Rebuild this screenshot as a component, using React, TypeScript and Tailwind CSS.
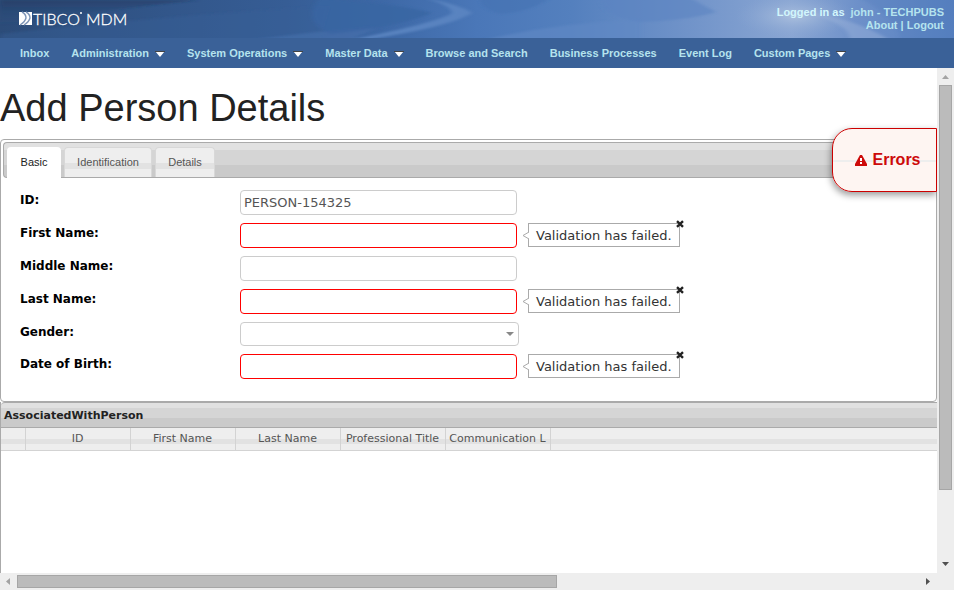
import { ReactNode } from "react";

const NAV_ITEMS = [
  { label: "Inbox" },
  { label: "Administration", menu: true },
  { label: "System Operations", menu: true },
  { label: "Master Data", menu: true },
  { label: "Browse and Search" },
  { label: "Business Processes" },
  { label: "Event Log" },
  { label: "Custom Pages", menu: true },
];

const COLUMNS = ["ID", "First Name", "Last Name", "Professional Title", "Communication L"];

function BannerArt() {
  return (
    <svg className="absolute inset-0 h-full w-full" viewBox="0 0 954 38" preserveAspectRatio="none" aria-hidden="true">
      <defs>
        <linearGradient id="sky" x1="0" x2="1" y1="0" y2="0">
          <stop offset="0" stopColor="#2c4c79" />
          <stop offset="0.12" stopColor="#305385" />
          <stop offset="0.3" stopColor="#365d95" />
          <stop offset="0.4" stopColor="#3d68a6" />
          <stop offset="0.5" stopColor="#4a77b8" />
          <stop offset="0.6" stopColor="#5480be" />
          <stop offset="0.72" stopColor="#7093c9" />
          <stop offset="0.83" stopColor="#8aa6d3" />
          <stop offset="0.9" stopColor="#6d90c9" />
          <stop offset="1" stopColor="#5680c0" />
        </linearGradient>
        <radialGradient id="glow">
          <stop offset="0" stopColor="#afc3df" stopOpacity="0.9" />
          <stop offset="1" stopColor="#8aa6d3" stopOpacity="0" />
        </radialGradient>
        <linearGradient id="base" x1="0" x2="0" y1="0" y2="1">
          <stop offset="0" stopColor="#1e3558" stopOpacity="0.5" />
          <stop offset="1" stopColor="#2f5184" stopOpacity="0" />
        </linearGradient>
        <filter id="soft" x="-10%" y="-30%" width="120%" height="160%">
          <feGaussianBlur stdDeviation="2 1" />
        </filter>
      </defs>
      <rect width="954" height="38" fill="url(#sky)" />
      <g filter="url(#soft)">
        <path d="M0 0H200Q120 8 0 26Z" fill="url(#base)" />
        <path d="M0 40V34Q160 16 330 6L320 40Z" fill="#375f98" opacity="0.4" />
        <path d="M250 40Q330 30 380 26L350 40Z" fill="#4772ae" opacity="0.6" />
        <path d="M320 -2Q400 4 432 13Q400 27 330 34Q300 20 320 -2Z" fill="#3a65a3" opacity="0.8" />
        <path d="M425 -2Q462 5 472 13Q450 27 365 40H350Q440 22 452 13Q452 6 425 -2Z" fill="#5b85c1" opacity="0.9" />
        <path d="M480 -2H550Q530 12 500 14Q480 8 480 -2Z" fill="#416fb1" opacity="0.5" />
        <path d="M484 40Q560 22 640 20V40Z" fill="#6089c5" opacity="0.6" />
        <path d="M600 -2H690L716 12Q690 20 640 22Q600 16 600 -2Z" fill="#5a84c1" opacity="0.6" />
        <path d="M860 -2H960V40H900Q900 20 860 -2Z" fill="#5079b9" opacity="0.3" />
        <path d="M800 12Q850 16 890 40H850Q850 22 800 12Z" fill="#a0b7dc" opacity="0.4" />
      </g>
      <ellipse cx="795" cy="16" rx="60" ry="22" fill="url(#glow)" />
    </svg>
  );
}

function Logo() {
  return (
    <svg className="relative ml-[19px] h-5 w-[112px]" viewBox="0 0 112 20" role="img" aria-label="TIBCO MDM">
      <rect y="4" width="13" height="13" fill="#fff" />
      <path d="M3 4Q7 6 7 10Q6 14 1 17" fill="none" stroke="#7d95b8" strokeWidth="1.400" />
      <path d="M7 4Q11 6 11 10Q10 14 5 17" fill="none" stroke="#7d95b8" strokeWidth="1.400" />
      <g fill="#fff" stroke="#fff" strokeWidth="0.300" fontFamily="Lato, sans-serif" fontWeight="300" fontSize="16">
        <text x="14" y="17">TIBCO</text>
        <text x="67" y="17">MDM</text>
      </g>
      <circle cx="62" cy="5" r="1" fill="#fff" />
    </svg>
  );
}

function Header() {
  return (
    <header className="shrink-0 text-[11px] font-bold text-[#b5e3ee]">
      <div className="relative flex h-[38px] items-start justify-between overflow-hidden pt-2">
        <BannerArt />
        <Logo />
        <div className="relative -mt-[2px] pr-[10px] text-right leading-[13px]">
          <p>
            <span className="text-[#d2f6fc]">Logged in as</span>
            <span className="ml-[6px]">john - TECHPUBS</span>
          </p>
          <p>
            <a href="#about">About</a> | <a href="#logout">Logout</a>
          </p>
        </div>
      </div>
      <nav className="flex h-[30px] items-center gap-[22px] bg-[#3a6198] pl-5 whitespace-nowrap">
        {NAV_ITEMS.map((item) => (
          <a key={item.label} href="#menu" className="flex items-center gap-[6px]">
            {item.label}
            {item.menu && (
              <svg className="mt-[2px] h-[6px] w-[10px]" viewBox="0 0 10 6" aria-hidden="true">
                <path d="M0 0H10L5 6Z" fill="#fff" />
                <path d="M0 0.5H10" stroke="#444" />
              </svg>
            )}
          </a>
        ))}
      </nav>
    </header>
  );
}

function ValidationNote() {
  return (
    <div className="relative ml-[11px] flex h-6 items-center border border-[#aaa] bg-white px-[7px] pt-px text-[13px] whitespace-nowrap text-[#333]">
      <svg className="absolute top-[7px] -left-[7px] h-[9px] w-[8px]" viewBox="0 0 8 9" aria-hidden="true">
        <path d="M7 1L1 4.500L7 8H8V1Z" fill="#fff" />
        <path d="M7 1L1 4.500L7 8" fill="none" stroke="#aaa" />
      </svg>
      Validation has failed.
      <button type="button" aria-label="Close" className="absolute -top-[4px] -right-[5px] h-[8px] w-[8px]">
        <svg className="block h-full w-full" viewBox="0 0 8 8">
          <path d="M1 1.200L7 6.800M7 1.200L1 6.800" stroke="#222" strokeWidth="2.400" />
        </svg>
      </button>
    </div>
  );
}

function Row({ id, label, children }: { id: string; label: string; children: ReactNode }) {
  return (
    <div className="flex items-start">
      <label htmlFor={id} className="w-[220px] shrink-0 pt-[3px] text-[12px] leading-[15px] font-bold text-black">
        {label}
      </label>
      {children}
    </div>
  );
}

function TextField({ id, label, value, failed }: { id: string; label: string; value?: string; failed?: boolean }) {
  return (
    <Row id={id} label={label}>
      <input
        id={id}
        type="text"
        defaultValue={value}
        aria-invalid={failed}
        className={
          "h-[25px] w-[277px] rounded-[4px] border bg-white px-[3px] text-[13px] text-[#555] outline-none " +
          (failed ? "border-[#f00]" : "border-[#ccc]")
        }
      />
      {failed && <ValidationNote />}
    </Row>
  );
}

const GREY_BAR = "bg-[linear-gradient(#e1e1e1_0_22%,#d5d5d5_22%_64%,#cacaca_64%)]";
const LIGHT_BAR = "bg-[linear-gradient(#eee_0_50%,#e2e2e2_50%_75%,#eee_75%)]";

function Tabs() {
  const idle =
    "h-[30px] rounded-t-[4px] border border-b-0 border-[#d8d8d8] text-[#555] bg-[linear-gradient(#eee_0_50%,#e2e2e2_50%_71%,#eee_71%)]";
  return (
    <div role="tablist" className={"flex h-[36px] items-end gap-[3px] rounded-l-[4px] border border-r-0 border-[#aaa] pl-[3px] text-[11px] " + GREY_BAR}>
      <button type="button" role="tab" aria-selected="true" className="-mb-px h-[31px] w-[54px] rounded-t-[4px] bg-white pb-px text-[#222]">
        Basic
      </button>
      <button type="button" role="tab" aria-selected="false" className={"w-[88px] pb-px " + idle}>
        Identification
      </button>
      <button type="button" role="tab" aria-selected="false" className={"w-[60px] pb-px " + idle}>
        Details
      </button>
    </div>
  );
}

function VerticalScrollbar() {
  return (
    <div aria-hidden="true" className="flex w-[17px] shrink-0 flex-col items-center bg-[#eee] pb-[7px]">
      <svg className="mt-[7px] mb-[6px] h-[4px] w-[7px] shrink-0" viewBox="0 0 7 4">
        <path d="M0 4L3.500 0L7 4Z" fill="#a3a3a3" />
      </svg>
      <div className="h-[405px] w-[13px] border border-[#a6a6a6] bg-[#bbb]" />
      <svg className="mt-auto h-[4px] w-[7px] shrink-0" viewBox="0 0 7 4">
        <path d="M0 0H7L3.500 4Z" fill="#505050" />
      </svg>
    </div>
  );
}

function HorizontalScrollbar() {
  return (
    <div aria-hidden="true" className="flex h-[17px] shrink-0 items-center bg-[#eee] pr-[24px] pl-[6px]">
      <svg className="mr-[7px] h-[7px] w-[4px]" viewBox="0 0 4 7">
        <path d="M4 0V7L0 3.500Z" fill="#a3a3a3" />
      </svg>
      <div className="h-[13px] w-[540px] border border-[#a6a6a6] bg-[#bbb]" />
      <svg className="ml-auto h-[7px] w-[4px]" viewBox="0 0 4 7">
        <path d="M0 0V7L4 3.500Z" fill="#505050" />
      </svg>
    </div>
  );
}

export default function App() {
  return (
    <div className="flex h-screen flex-col overflow-hidden bg-white font-['Liberation_Sans',Arial,sans-serif]">
      <Header />
      <div className="flex min-h-0 flex-1">
        <main className="relative flex min-w-0 flex-1 flex-col overflow-hidden">
          <h1 className="pt-[18px] pb-[9px] text-[38px] leading-[44px] text-[#222]">Add Person Details</h1>

          <section className="rounded-[4px] border border-[#aaa] pt-[2px] pl-[2px]">
            <Tabs />
            <form className="flex flex-col gap-2 pt-3 pb-[22px] pl-[17px] font-['DejaVu_Sans',Verdana,sans-serif]">
              <TextField id="person-id" label="ID:" value="PERSON-154325" />
              <TextField id="first-name" label="First Name:" failed />
              <TextField id="middle-name" label="Middle Name:" />
              <TextField id="last-name" label="Last Name:" failed />
              <Row id="gender" label="Gender:">
                <div className="relative">
                  <select id="gender" className="block h-6 w-[279px] appearance-none rounded-[4px] border border-[#ccc] bg-white px-1 text-[13px] outline-none">
                    <option value=""></option>
                    <option>Female</option>
                    <option>Male</option>
                  </select>
                  <svg className="pointer-events-none absolute top-[10px] right-[5px] h-[4px] w-[8px]" viewBox="0 0 8 4" aria-hidden="true">
                    <path d="M0 0H8L4 4Z" fill="#888" />
                  </svg>
                </div>
              </Row>
              <TextField id="birth-date" label="Date of Birth:" failed />
            </form>
          </section>

          <section className="flex flex-1 flex-col border-l border-[#aaa] font-['DejaVu_Sans',Verdana,sans-serif] text-[11px]">
            <h2 className={"flex h-[26px] shrink-0 items-center rounded-tl-[4px] border-y border-[#aaa] pt-[2px] pl-[3px] font-bold text-[#222] " + GREY_BAR}>
              AssociatedWithPerson
            </h2>
            <div className={"shrink-0 border-b border-[#d3d3d3] " + LIGHT_BAR}>
              <table className="table-fixed border-collapse text-[#555]">
                <thead>
                  <tr className="h-[22px]">
                    <th className="w-[24px] border-r border-[#d3d3d3] p-0" aria-label="Select" />
                    {COLUMNS.map((name) => (
                      <th key={name} className="w-[105px] max-w-[105px] overflow-hidden border-r border-[#d3d3d3] p-0 text-center font-normal whitespace-nowrap">
                        {name}
                      </th>
                    ))}
                  </tr>
                </thead>
              </table>
            </div>
          </section>

          <button
            type="button"
            className="absolute top-[60px] right-0 flex h-16 w-[105px] items-center justify-center gap-[5px] rounded-l-[20px] border border-[#c00] bg-[linear-gradient(#fef5f2_0_50%,#eee_50%_54%,#fef5f2_54%)] pl-[7px] text-[16px] font-bold text-[#cd0a0a] shadow-[-1px_3px_7px_rgba(0,0,0,0.4)]"
          >
            <svg className="h-[11px] w-[12px]" viewBox="0 0 12 11" aria-hidden="true">
              <path d="M5 0H7L12 9V11H0V9Z" fill="#cd0a0a" />
              <path d="M5 3H7V6H5ZM5 7H7V9H5Z" fill="#fff" />
            </svg>
            Errors
          </button>
        </main>
        <VerticalScrollbar />
      </div>
      <HorizontalScrollbar />
    </div>
  );
}
